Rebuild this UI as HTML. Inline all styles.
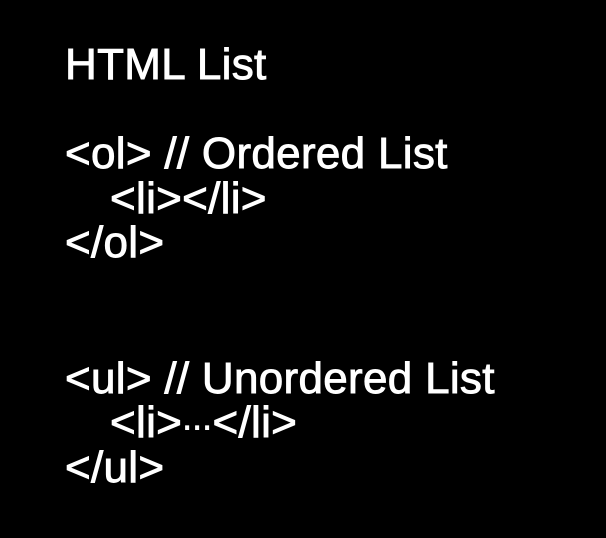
<!DOCTYPE html>
<html><head><meta charset="utf-8"><style>
html,body{margin:0;padding:0;background:#000;width:606px;height:538px;overflow:hidden}
.l{position:absolute;left:65px;color:#fff;font-family:"Liberation Sans","DejaVu Sans",sans-serif;font-size:44px;line-height:44px;white-space:pre;-webkit-text-stroke:0.9px #fff;letter-spacing:0.3px}
</style></head><body>
<div class="l" style="top:43px">HTML List</div>
<div class="l" style="top:132px">&lt;ol&gt; // Ordered List</div>
<div class="l" style="top:177px;left:110px">&lt;li&gt;&lt;/li&gt;</div>
<div class="l" style="top:221px">&lt;/ol&gt;</div>
<div class="l" style="top:357px">&lt;ul&gt; // Unordered List</div>
<div class="l" style="top:401px;left:110px">&lt;li&gt;<span style="font-size:30px">⋯</span>&lt;/li&gt;</div>
<div class="l" style="top:446px">&lt;/ul&gt;</div>
</body></html>
